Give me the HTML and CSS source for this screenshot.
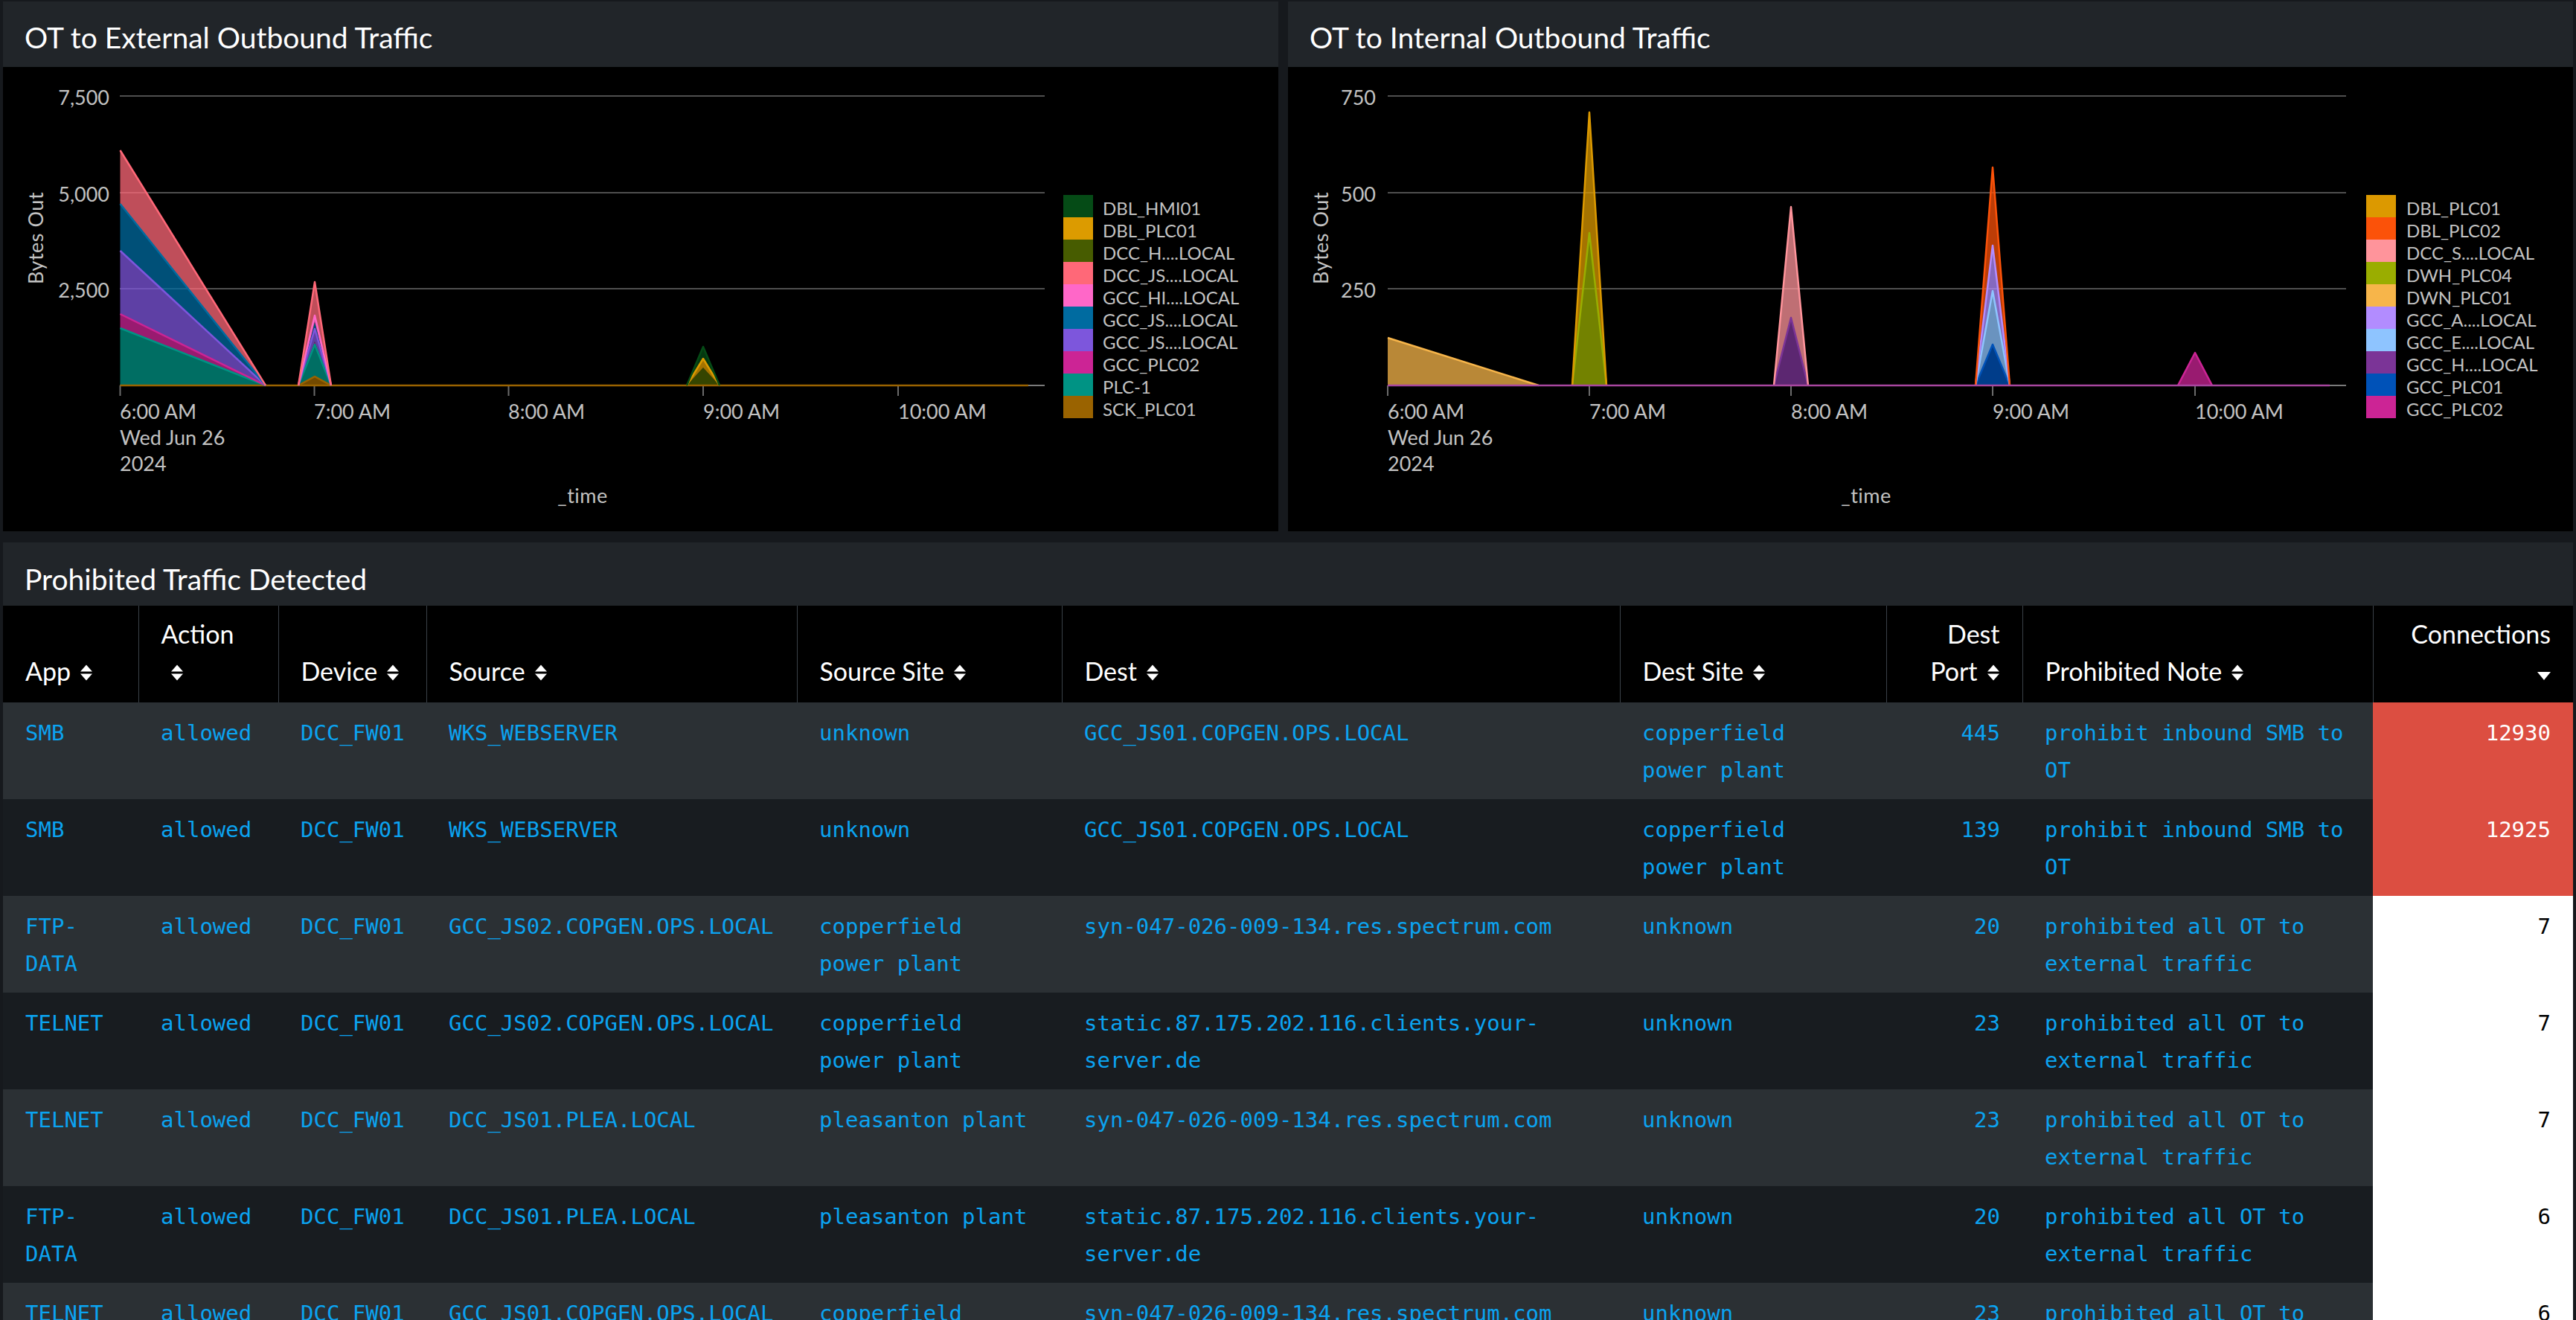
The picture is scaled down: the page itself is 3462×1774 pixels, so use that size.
FILE: index.html
```html
<!DOCTYPE html>
<html lang="en">
<head>
<meta charset="utf-8">
<title>OT Traffic Dashboard</title>
<link rel="stylesheet" href="styles.css">
</head>
<body>
<div class="dash">
  <div class="top-row">
    <section class="panel panel-left">
      <div class="panel-title">OT to External Outbound Traffic</div>
      <div class="chart-body">
        <svg class="chart-svg" width="1714" height="624" viewBox="0 0 1714 624">
          <g class="grid">
            <line x1="157" y1="39" x2="1400" y2="39"/>
            <line x1="157" y1="169" x2="1400" y2="169"/>
            <line x1="157" y1="298" x2="1400" y2="298"/>
          </g>
          <line class="axis" x1="157" y1="428" x2="1400" y2="428"/>
          <g class="ticks">
            <line x1="157.5" y1="428" x2="157.5" y2="442"/>
            <line x1="418.5" y1="428" x2="418.5" y2="442"/>
            <line x1="679.5" y1="428" x2="679.5" y2="442"/>
            <line x1="941" y1="428" x2="941" y2="442"/>
            <line x1="1203" y1="428" x2="1203" y2="442"/>
          </g>
          <g class="areas">
            <polygon fill="#009384" points="157.5,428 157.5,351 353,428"/>
            <polygon fill="#cc2495" points="157.5,351 157.5,332 353,428"/>
            <polygon fill="#7d56dc" points="157.5,332 157.5,247 353,428"/>
            <polygon fill="#006ba0" points="157.5,247 157.5,184 353,428"/>
            <polygon fill="#ff6878" points="157.5,184 157.5,112 353,428"/>

            <polygon fill="#9a6300" points="397,428 419,416 441,428"/>
            <polygon fill="#009384" points="397,428 419,373 441,428 419,416"/>
            <polygon fill="#cc2495" points="397,428 419,369 441,428 419,373"/>
            <polygon fill="#7d56dc" points="397,428 419,352 441,428 419,369"/>
            <polygon fill="#006ba0" points="397,428 419,343 441,428 419,352"/>
            <polygon fill="#ff67c8" points="397,428 419,334 441,428 419,343"/>
            <polygon fill="#ff6878" points="397,428 419,289 441,428 419,334"/>

            <polygon fill="#475c00" points="919,428 941,404 963,428"/>
            <polygon fill="#dc9b00" points="919,428 941,392 963,428 941,404"/>
            <polygon fill="#054b16" points="919,428 941,376 963,428 941,392"/>
          </g>
          <g class="lines">
            <polyline stroke="#9a6300" points="157.5,428 1378,428"/>
            <polyline stroke="#009384" points="157.5,351 353,428"/>
            <polyline stroke="#cc2495" points="157.5,332 353,428"/>
            <polyline stroke="#7d56dc" points="157.5,247 353,428"/>
            <polyline stroke="#006ba0" points="157.5,184 353,428"/>
            <polyline stroke="#ff6878" points="157.5,112 353,428"/>

            <polyline stroke="#9a6300" points="397,428 419,416 441,428"/>
            <polyline stroke="#009384" points="397,428 419,373 441,428"/>
            <polyline stroke="#7d56dc" points="397,428 419,352 441,428"/>
            <polyline stroke="#ff67c8" points="397,428 419,334 441,428"/>
            <polyline stroke="#ff6878" points="397,428 419,289 441,428"/>

            <polyline stroke="#dc9b00" points="919,428 941,392 963,428"/>
            <polyline stroke="#054b16" points="919,428 941,376 963,428"/>
          </g>
          <g class="ylabels">
            <text x="143" y="51">7,500</text>
            <text x="143" y="181">5,000</text>
            <text x="143" y="310">2,500</text>
          </g>
          <g class="xlabels">
            <text x="157" y="473">6:00 AM</text>
            <text x="157" y="508">Wed Jun 26</text>
            <text x="157" y="543">2024</text>
            <text x="418" y="473">7:00 AM</text>
            <text x="679" y="473">8:00 AM</text>
            <text x="941" y="473">9:00 AM</text>
            <text x="1203" y="473">10:00 AM</text>
          </g>
          <text class="axis-title" x="779" y="586">_time</text>
          <text class="axis-title" transform="translate(45 230) rotate(-90)" x="0" y="9">Bytes Out</text>
          <g class="legend">
            <rect fill="#054b16" x="1425" y="172" width="40" height="30"/>
            <rect fill="#dc9b00" x="1425" y="202" width="40" height="30"/>
            <rect fill="#475c00" x="1425" y="232" width="40" height="30"/>
            <rect fill="#ff6878" x="1425" y="262" width="40" height="30"/>
            <rect fill="#ff67c8" x="1425" y="292" width="40" height="30"/>
            <rect fill="#006ba0" x="1425" y="322" width="40" height="30"/>
            <rect fill="#7d56dc" x="1425" y="352" width="40" height="30"/>
            <rect fill="#cc2495" x="1425" y="382" width="40" height="30"/>
            <rect fill="#009384" x="1425" y="412" width="40" height="30"/>
            <rect fill="#9a6300" x="1425" y="442" width="40" height="30"/>
            <text x="1478" y="199">DBL_HMI01</text>
            <text x="1478" y="229">DBL_PLC01</text>
            <text x="1478" y="259">DCC_H....LOCAL</text>
            <text x="1478" y="289">DCC_JS....LOCAL</text>
            <text x="1478" y="319">GCC_HI....LOCAL</text>
            <text x="1478" y="349">GCC_JS....LOCAL</text>
            <text x="1478" y="379">GCC_JS....LOCAL</text>
            <text x="1478" y="409">GCC_PLC02</text>
            <text x="1478" y="439">PLC-1</text>
            <text x="1478" y="469">SCK_PLC01</text>
          </g>
        </svg>
      </div>
    </section>

    <section class="panel panel-right">
      <div class="panel-title">OT to Internal Outbound Traffic</div>
      <div class="chart-body">
        <svg class="chart-svg" width="1727" height="624" viewBox="0 0 1727 624">
          <g class="grid">
            <line x1="134" y1="39" x2="1422" y2="39"/>
            <line x1="134" y1="169" x2="1422" y2="169"/>
            <line x1="134" y1="298" x2="1422" y2="298"/>
          </g>
          <line class="axis" x1="134" y1="428" x2="1422" y2="428"/>
          <g class="ticks">
            <line x1="134" y1="428" x2="134" y2="442"/>
            <line x1="405" y1="428" x2="405" y2="442"/>
            <line x1="676" y1="428" x2="676" y2="442"/>
            <line x1="947" y1="428" x2="947" y2="442"/>
            <line x1="1219" y1="428" x2="1219" y2="442"/>
          </g>
          <g class="areas">
            <polygon fill="#f7b54a" points="134,428 134,364 337,428"/>

            <polygon fill="#9aad00" points="382,428 405,223 428,428"/>
            <polygon fill="#dc9900" points="382,428 405,61 428,428 405,223"/>

            <polygon fill="#7b3497" points="653,428 676,337 699,428"/>
            <polygon fill="#ff949b" points="653,428 676,188 699,428 676,337"/>

            <polygon fill="#0052b8" points="924,428 947,373 970,428"/>
            <polygon fill="#8ec4ff" points="924,428 947,301 970,428 947,373"/>
            <polygon fill="#b28cff" points="924,428 947,240 970,428 947,301"/>
            <polygon fill="#fb5209" points="924,428 947,135 970,428 947,240"/>

            <polygon fill="#cc2495" points="1196,428 1219,384 1242,428"/>
          </g>
          <g class="lines">
            <polyline stroke="#f7b54a" points="134,364 337,428"/>
            <polyline stroke="#9aad00" points="382,428 405,223 428,428"/>
            <polyline stroke="#dc9900" points="382,428 405,61 428,428"/>
            <polyline stroke="#7b3497" points="653,428 676,337 699,428"/>
            <polyline stroke="#ff949b" points="653,428 676,188 699,428"/>
            <polyline stroke="#0052b8" points="924,428 947,373 970,428"/>
            <polyline stroke="#8ec4ff" points="924,428 947,301 970,428"/>
            <polyline stroke="#b28cff" points="924,428 947,240 970,428"/>
            <polyline stroke="#fb5209" points="924,428 947,135 970,428"/>
            <polyline stroke="#cc2495" points="1196,428 1219,384 1242,428"/>
            <polyline stroke="#a8469f" points="134,428 1400,428"/>
          </g>
          <g class="ylabels">
            <text x="118" y="51">750</text>
            <text x="118" y="181">500</text>
            <text x="118" y="310">250</text>
          </g>
          <g class="xlabels">
            <text x="134" y="473">6:00 AM</text>
            <text x="134" y="508">Wed Jun 26</text>
            <text x="134" y="543">2024</text>
            <text x="405" y="473">7:00 AM</text>
            <text x="676" y="473">8:00 AM</text>
            <text x="947" y="473">9:00 AM</text>
            <text x="1219" y="473">10:00 AM</text>
          </g>
          <text class="axis-title" x="777" y="586">_time</text>
          <text class="axis-title" transform="translate(45 230) rotate(-90)" x="0" y="9">Bytes Out</text>
          <g class="legend">
            <rect fill="#dc9900" x="1449" y="172" width="40" height="30"/>
            <rect fill="#fb5209" x="1449" y="202" width="40" height="30"/>
            <rect fill="#ff949b" x="1449" y="232" width="40" height="30"/>
            <rect fill="#9aad00" x="1449" y="262" width="40" height="30"/>
            <rect fill="#f7b54a" x="1449" y="292" width="40" height="30"/>
            <rect fill="#b28cff" x="1449" y="322" width="40" height="30"/>
            <rect fill="#8ec4ff" x="1449" y="352" width="40" height="30"/>
            <rect fill="#7b3497" x="1449" y="382" width="40" height="30"/>
            <rect fill="#0052b8" x="1449" y="412" width="40" height="30"/>
            <rect fill="#cc2495" x="1449" y="442" width="40" height="30"/>
            <text x="1503" y="199">DBL_PLC01</text>
            <text x="1503" y="229">DBL_PLC02</text>
            <text x="1503" y="259">DCC_S....LOCAL</text>
            <text x="1503" y="289">DWH_PLC04</text>
            <text x="1503" y="319">DWN_PLC01</text>
            <text x="1503" y="349">GCC_A....LOCAL</text>
            <text x="1503" y="379">GCC_E....LOCAL</text>
            <text x="1503" y="409">GCC_H....LOCAL</text>
            <text x="1503" y="439">GCC_PLC01</text>
            <text x="1503" y="469">GCC_PLC02</text>
          </g>
        </svg>
      </div>
    </section>
  </div>

  <section class="panel panel-table">
    <div class="panel-title table-title">Prohibited Traffic Detected</div>
    <table class="grid-table">
      <colgroup>
        <col class="w-app"><col class="w-action"><col class="w-device"><col class="w-source"><col class="w-ssite">
        <col class="w-dest"><col class="w-dsite"><col class="w-port"><col class="w-note"><col class="w-conn">
      </colgroup>
      <thead>
        <tr>
          <th>App<svg class="sort" viewBox="0 0 18 24" width="18" height="24"><path d="M1 10.5 9 1.5 17 10.5Z M1 13.5 17 13.5 9 22.5Z"/></svg></th>
          <th>Action<br><svg class="sort" viewBox="0 0 18 24" width="18" height="24"><path d="M1 10.5 9 1.5 17 10.5Z M1 13.5 17 13.5 9 22.5Z"/></svg></th>
          <th>Device<svg class="sort" viewBox="0 0 18 24" width="18" height="24"><path d="M1 10.5 9 1.5 17 10.5Z M1 13.5 17 13.5 9 22.5Z"/></svg></th>
          <th>Source<svg class="sort" viewBox="0 0 18 24" width="18" height="24"><path d="M1 10.5 9 1.5 17 10.5Z M1 13.5 17 13.5 9 22.5Z"/></svg></th>
          <th>Source Site<svg class="sort" viewBox="0 0 18 24" width="18" height="24"><path d="M1 10.5 9 1.5 17 10.5Z M1 13.5 17 13.5 9 22.5Z"/></svg></th>
          <th>Dest<svg class="sort" viewBox="0 0 18 24" width="18" height="24"><path d="M1 10.5 9 1.5 17 10.5Z M1 13.5 17 13.5 9 22.5Z"/></svg></th>
          <th>Dest Site<svg class="sort" viewBox="0 0 18 24" width="18" height="24"><path d="M1 10.5 9 1.5 17 10.5Z M1 13.5 17 13.5 9 22.5Z"/></svg></th>
          <th class="num">Dest<br>Port<svg class="sort" viewBox="0 0 18 24" width="18" height="24"><path d="M1 10.5 9 1.5 17 10.5Z M1 13.5 17 13.5 9 22.5Z"/></svg></th>
          <th>Prohibited Note<svg class="sort" viewBox="0 0 18 24" width="18" height="24"><path d="M1 10.5 9 1.5 17 10.5Z M1 13.5 17 13.5 9 22.5Z"/></svg></th>
          <th class="num">Connections<br><svg class="sort-desc" viewBox="0 0 18 11" width="18" height="11"><path d="M0 0 18 0 9 11Z"/></svg></th>
        </tr>
      </thead>
      <tbody>
        <tr>
          <td>SMB</td><td>allowed</td><td>DCC_FW01</td><td>WKS_WEBSERVER</td><td>unknown</td>
          <td>GCC_JS01.COPGEN.OPS.LOCAL</td><td>copperfield<br>power plant</td><td class="num">445</td>
          <td>prohibit inbound SMB to<br>OT</td><td class="num conn hot">12930</td>
        </tr>
        <tr>
          <td>SMB</td><td>allowed</td><td>DCC_FW01</td><td>WKS_WEBSERVER</td><td>unknown</td>
          <td>GCC_JS01.COPGEN.OPS.LOCAL</td><td>copperfield<br>power plant</td><td class="num">139</td>
          <td>prohibit inbound SMB to<br>OT</td><td class="num conn hot">12925</td>
        </tr>
        <tr>
          <td>FTP-<br>DATA</td><td>allowed</td><td>DCC_FW01</td><td>GCC_JS02.COPGEN.OPS.LOCAL</td><td>copperfield<br>power plant</td>
          <td>syn-047-026-009-134.res.spectrum.com</td><td>unknown</td><td class="num">20</td>
          <td>prohibited all OT to<br>external traffic</td><td class="num conn">7</td>
        </tr>
        <tr>
          <td>TELNET</td><td>allowed</td><td>DCC_FW01</td><td>GCC_JS02.COPGEN.OPS.LOCAL</td><td>copperfield<br>power plant</td>
          <td>static.87.175.202.116.clients.your-<br>server.de</td><td>unknown</td><td class="num">23</td>
          <td>prohibited all OT to<br>external traffic</td><td class="num conn">7</td>
        </tr>
        <tr>
          <td>TELNET</td><td>allowed</td><td>DCC_FW01</td><td>DCC_JS01.PLEA.LOCAL</td><td>pleasanton plant</td>
          <td>syn-047-026-009-134.res.spectrum.com</td><td>unknown</td><td class="num">23</td>
          <td>prohibited all OT to<br>external traffic</td><td class="num conn">7</td>
        </tr>
        <tr>
          <td>FTP-<br>DATA</td><td>allowed</td><td>DCC_FW01</td><td>DCC_JS01.PLEA.LOCAL</td><td>pleasanton plant</td>
          <td>static.87.175.202.116.clients.your-<br>server.de</td><td>unknown</td><td class="num">20</td>
          <td>prohibited all OT to<br>external traffic</td><td class="num conn">6</td>
        </tr>
        <tr>
          <td>TELNET</td><td>allowed</td><td>DCC_FW01</td><td>GCC_JS01.COPGEN.OPS.LOCAL</td><td>copperfield<br>power plant</td>
          <td>syn-047-026-009-134.res.spectrum.com</td><td>unknown</td><td class="num">23</td>
          <td>prohibited all OT to<br>external traffic</td><td class="num conn">6</td>
        </tr>
      </tbody>
    </table>
  </section>
</div>
</body>
</html>
```

FILE: styles.css
```css
html, body {
  margin: 0;
  padding: 0;
  background: #16191d;
  overflow: hidden;
}

.dash {
  padding: 2px 4px 0 4px;
  display: flex;
  flex-direction: column;
  gap: 15px;
  font-family: Lato, "Liberation Sans", sans-serif;
}

.top-row {
  display: flex;
  gap: 13px;
  height: 712px;
}

.panel {
  display: flex;
  flex-direction: column;
}

.panel-left { width: 1714px; }
.panel-right { width: 1727px; }
.panel-table { width: 3454px; }

.panel-title {
  box-sizing: border-box;
  height: 88px;
  padding: 8px 29px 0 29px;
  display: flex;
  align-items: center;
  background: #212529;
  color: #ffffff;
  font-family: Lato, "Liberation Sans", sans-serif;
  font-size: 39px;
  white-space: nowrap;
}

.table-title {
  height: 85px;
  padding-top: 12px;
}

.chart-body {
  height: 624px;
  background: #000000;
}

.chart-svg {
  display: block;
  font-family: Lato, "Liberation Sans", sans-serif;
}

.grid line {
  stroke: #4f4f4f;
  stroke-width: 2;
}

.axis {
  stroke: #7a7a7a;
  stroke-width: 2;
}

.ticks line {
  stroke: #6b6b6b;
  stroke-width: 2;
}

.areas polygon {
  fill-opacity: 0.75;
}

.lines polyline {
  fill: none;
  stroke-width: 2.5;
  stroke-linejoin: round;
}

.ylabels text {
  fill: #c2c2c2;
  font-size: 27px;
  text-anchor: end;
}

.xlabels text {
  fill: #c2c2c2;
  font-size: 27px;
}

.axis-title {
  fill: #c2c2c2;
  font-size: 27px;
  text-anchor: middle;
  letter-spacing: 0.5px;
}

.legend text {
  fill: #c2c2c2;
  font-size: 24px;
}

/* table */
.grid-table {
  width: 3454px;
  table-layout: fixed;
  border-collapse: collapse;
  border-spacing: 0;
}

.w-app { width: 182px; }
.w-action { width: 188px; }
.w-device { width: 199px; }
.w-source { width: 498px; }
.w-ssite { width: 356px; }
.w-dest { width: 750px; }
.w-dsite { width: 358px; }
.w-port { width: 183px; }
.w-note { width: 471px; }
.w-conn { width: 269px; }

.grid-table th {
  box-sizing: border-box;
  height: 130px;
  padding: 13px 30px 17px 30px;
  background: #000000;
  color: #ffffff;
  font-family: Lato, "Liberation Sans", sans-serif;
  font-size: 34px;
  font-weight: 400;
  line-height: 50px;
  text-align: left;
  vertical-align: bottom;
  white-space: nowrap;
  border-left: 1px solid #3a4148;
}

.grid-table th:first-child {
  border-left: none;
}

.grid-table th.num,
.grid-table td.num {
  text-align: right;
}

.sort {
  fill: #ffffff;
  margin-left: 12px;
  vertical-align: -1px;
}

.sort-desc {
  fill: #ffffff;
  vertical-align: 1px;
}

.grid-table td {
  box-sizing: border-box;
  height: 130px;
  padding: 16px 30px 14px 30px;
  color: #0ba3f0;
  font-family: "DejaVu Sans Mono", "Liberation Mono", monospace;
  font-size: 29px;
  line-height: 50px;
  vertical-align: top;
  white-space: nowrap;
  overflow: hidden;
}

.grid-table tbody tr:nth-child(odd) td {
  background: #2b3034;
}

.grid-table tbody tr:nth-child(even) td {
  background: #181c20;
}

.grid-table tbody tr td.conn {
  background: #ffffff;
  color: #000000;
}

.grid-table tbody tr td.conn.hot {
  background: #dc4e41;
  color: #ffffff;
}
```
